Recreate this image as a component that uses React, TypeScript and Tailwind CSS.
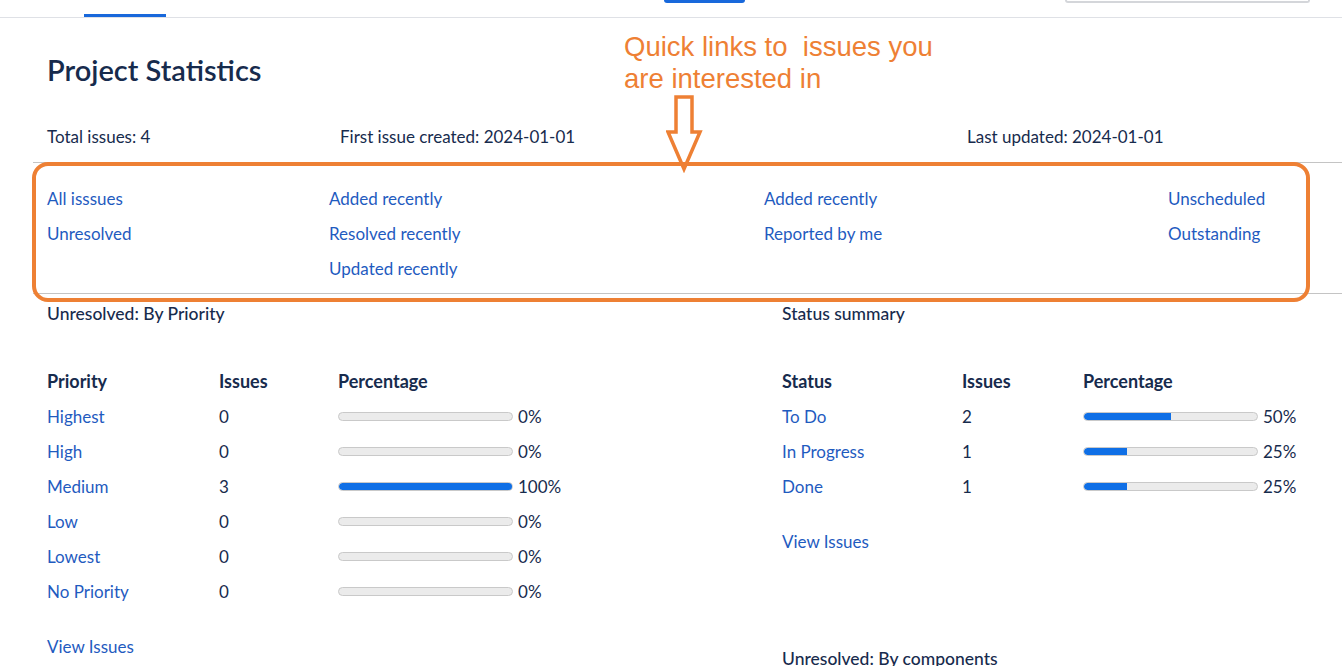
import React from "react";

const font = { fontFamily: '"Segoe UI", Lato, "Noto Sans", sans-serif' };

function Bar({ pct }: { pct: number }) {
  return (
    <div className="flex items-center">
      <div className="h-[9px] w-[175px] rounded-full bg-[#ebebeb] border border-[#c9c9c9] overflow-hidden">
        <div className="h-full bg-[#0f6fe6] rounded-l-full" style={{ width: `${pct}%` }} />
      </div>
      <span className="ml-[5px]">{pct}%</span>
    </div>
  );
}

const priorities: [string, number, number][] = [
  ["Highest", 0, 0],
  ["High", 0, 0],
  ["Medium", 3, 100],
  ["Low", 0, 0],
  ["Lowest", 0, 0],
  ["No Priority", 0, 0],
];

const statuses: [string, number, number][] = [
  ["To Do", 2, 50],
  ["In Progress", 1, 25],
  ["Done", 1, 25],
];

export default function App() {
  return (
    <div className="relative w-[1342px] h-[666px] overflow-hidden bg-white text-[#172b4d] text-[17px]" style={font}>
      {/* top header strip */}
      <div className="flex h-[18px] border-b border-[#dfe1e6]">
        <div className="ml-[84px] w-[82px] h-[3px] self-end bg-[#1868db]" />
        <div className="ml-[498px] w-[81px] h-[3px] bg-[#1868db] rounded-b-[3px]" />
        <div className="ml-[320px] w-[245px] h-[3px] border-x-2 border-b-2 border-[#d4d6da] rounded-b-[4px]" />
      </div>

      <div className="pl-[47px]">
        <h1 className="mt-[36px] text-[29px] leading-[32px] font-semibold text-[#172b4d]">Project Statistics</h1>

        <div className="mt-[39px] flex leading-[24px]">
          <div className="w-[293px]">Total issues: 4</div>
          <div className="w-[627px]">First issue created: 2024-01-01</div>
          <div>Last updated: 2024-01-01</div>
        </div>

        {/* quick links */}
        <div className="mt-[13px] -ml-[14px] pl-[14px] border-y border-[#c4c4c4] pt-[18px] pb-[7px] grid grid-cols-[282px_435px_404px_1fr] text-[#1f5bbf] leading-[35px]">
          <div className="flex flex-col">
            <span>All isssues</span>
            <span>Unresolved</span>
          </div>
          <div className="flex flex-col">
            <span>Added recently</span>
            <span>Resolved recently</span>
            <span>Updated recently</span>
          </div>
          <div className="flex flex-col">
            <span>Added recently</span>
            <span>Reported by me</span>
          </div>
          <div className="flex flex-col">
            <span>Unscheduled</span>
            <span>Outstanding</span>
          </div>
        </div>

        <div className="flex">
          {/* left */}
          <div className="w-[735px]">
            <div className="mt-[8px] leading-[24px] text-[17.5px] font-medium">Unresolved: By Priority</div>
            <div className="mt-[38px] leading-[35px]">
              <div className="flex font-bold text-[18px]">
                <div className="w-[172px]">Priority</div>
                <div className="w-[119px]">Issues</div>
                <div>Percentage</div>
              </div>
              {priorities.map(([n, c, p]) => (
                <div key={n} className="flex">
                  <div className="w-[172px] text-[#1f5bbf]">{n}</div>
                  <div className="w-[119px]">{c}</div>
                  <Bar pct={p} />
                </div>
              ))}
            </div>
            <div className="mt-[20px] leading-[35px] text-[#1f5bbf]">View Issues</div>
          </div>
          {/* right */}
          <div className="flex-1">
            <div className="mt-[8px] leading-[24px] text-[17.5px] font-medium">Status summary</div>
            <div className="mt-[38px] leading-[35px]">
              <div className="flex font-bold text-[18px]">
                <div className="w-[180px]">Status</div>
                <div className="w-[121px]">Issues</div>
                <div>Percentage</div>
              </div>
              {statuses.map(([n, c, p]) => (
                <div key={n} className="flex">
                  <div className="w-[180px] text-[#1f5bbf]">{n}</div>
                  <div className="w-[121px]">{c}</div>
                  <Bar pct={p} />
                </div>
              ))}
            </div>
            <div className="mt-[20px] leading-[35px] text-[#1f5bbf]">View Issues</div>
            <div className="mt-[88px] leading-[24px] text-[17.5px] font-medium">Unresolved: By components</div>
          </div>
        </div>
      </div>

      {/* annotation overlay */}
      <div
        className="absolute left-[624px] top-[31px] text-[27.5px] leading-[32px] text-[#ee8034] whitespace-pre"
        style={{ fontFamily: '"Liberation Sans", Arial, sans-serif' }}
      >
        {"Quick links to  issues you\nare interested in"}
      </div>
      <svg className="absolute left-[666px] top-[95px]" width="38" height="78" viewBox="0 0 38 78">
        <path d="M10 2 H26 V37 H34 L18 74 L2 37 H10 Z" fill="white" stroke="#ee8034" strokeWidth="3.5" strokeLinejoin="miter" />
      </svg>
      <div className="absolute left-[32px] top-[162px] w-[1278px] h-[140px] border-[4px] border-[#ee8034] rounded-[16px]" />
    </div>
  );
}
